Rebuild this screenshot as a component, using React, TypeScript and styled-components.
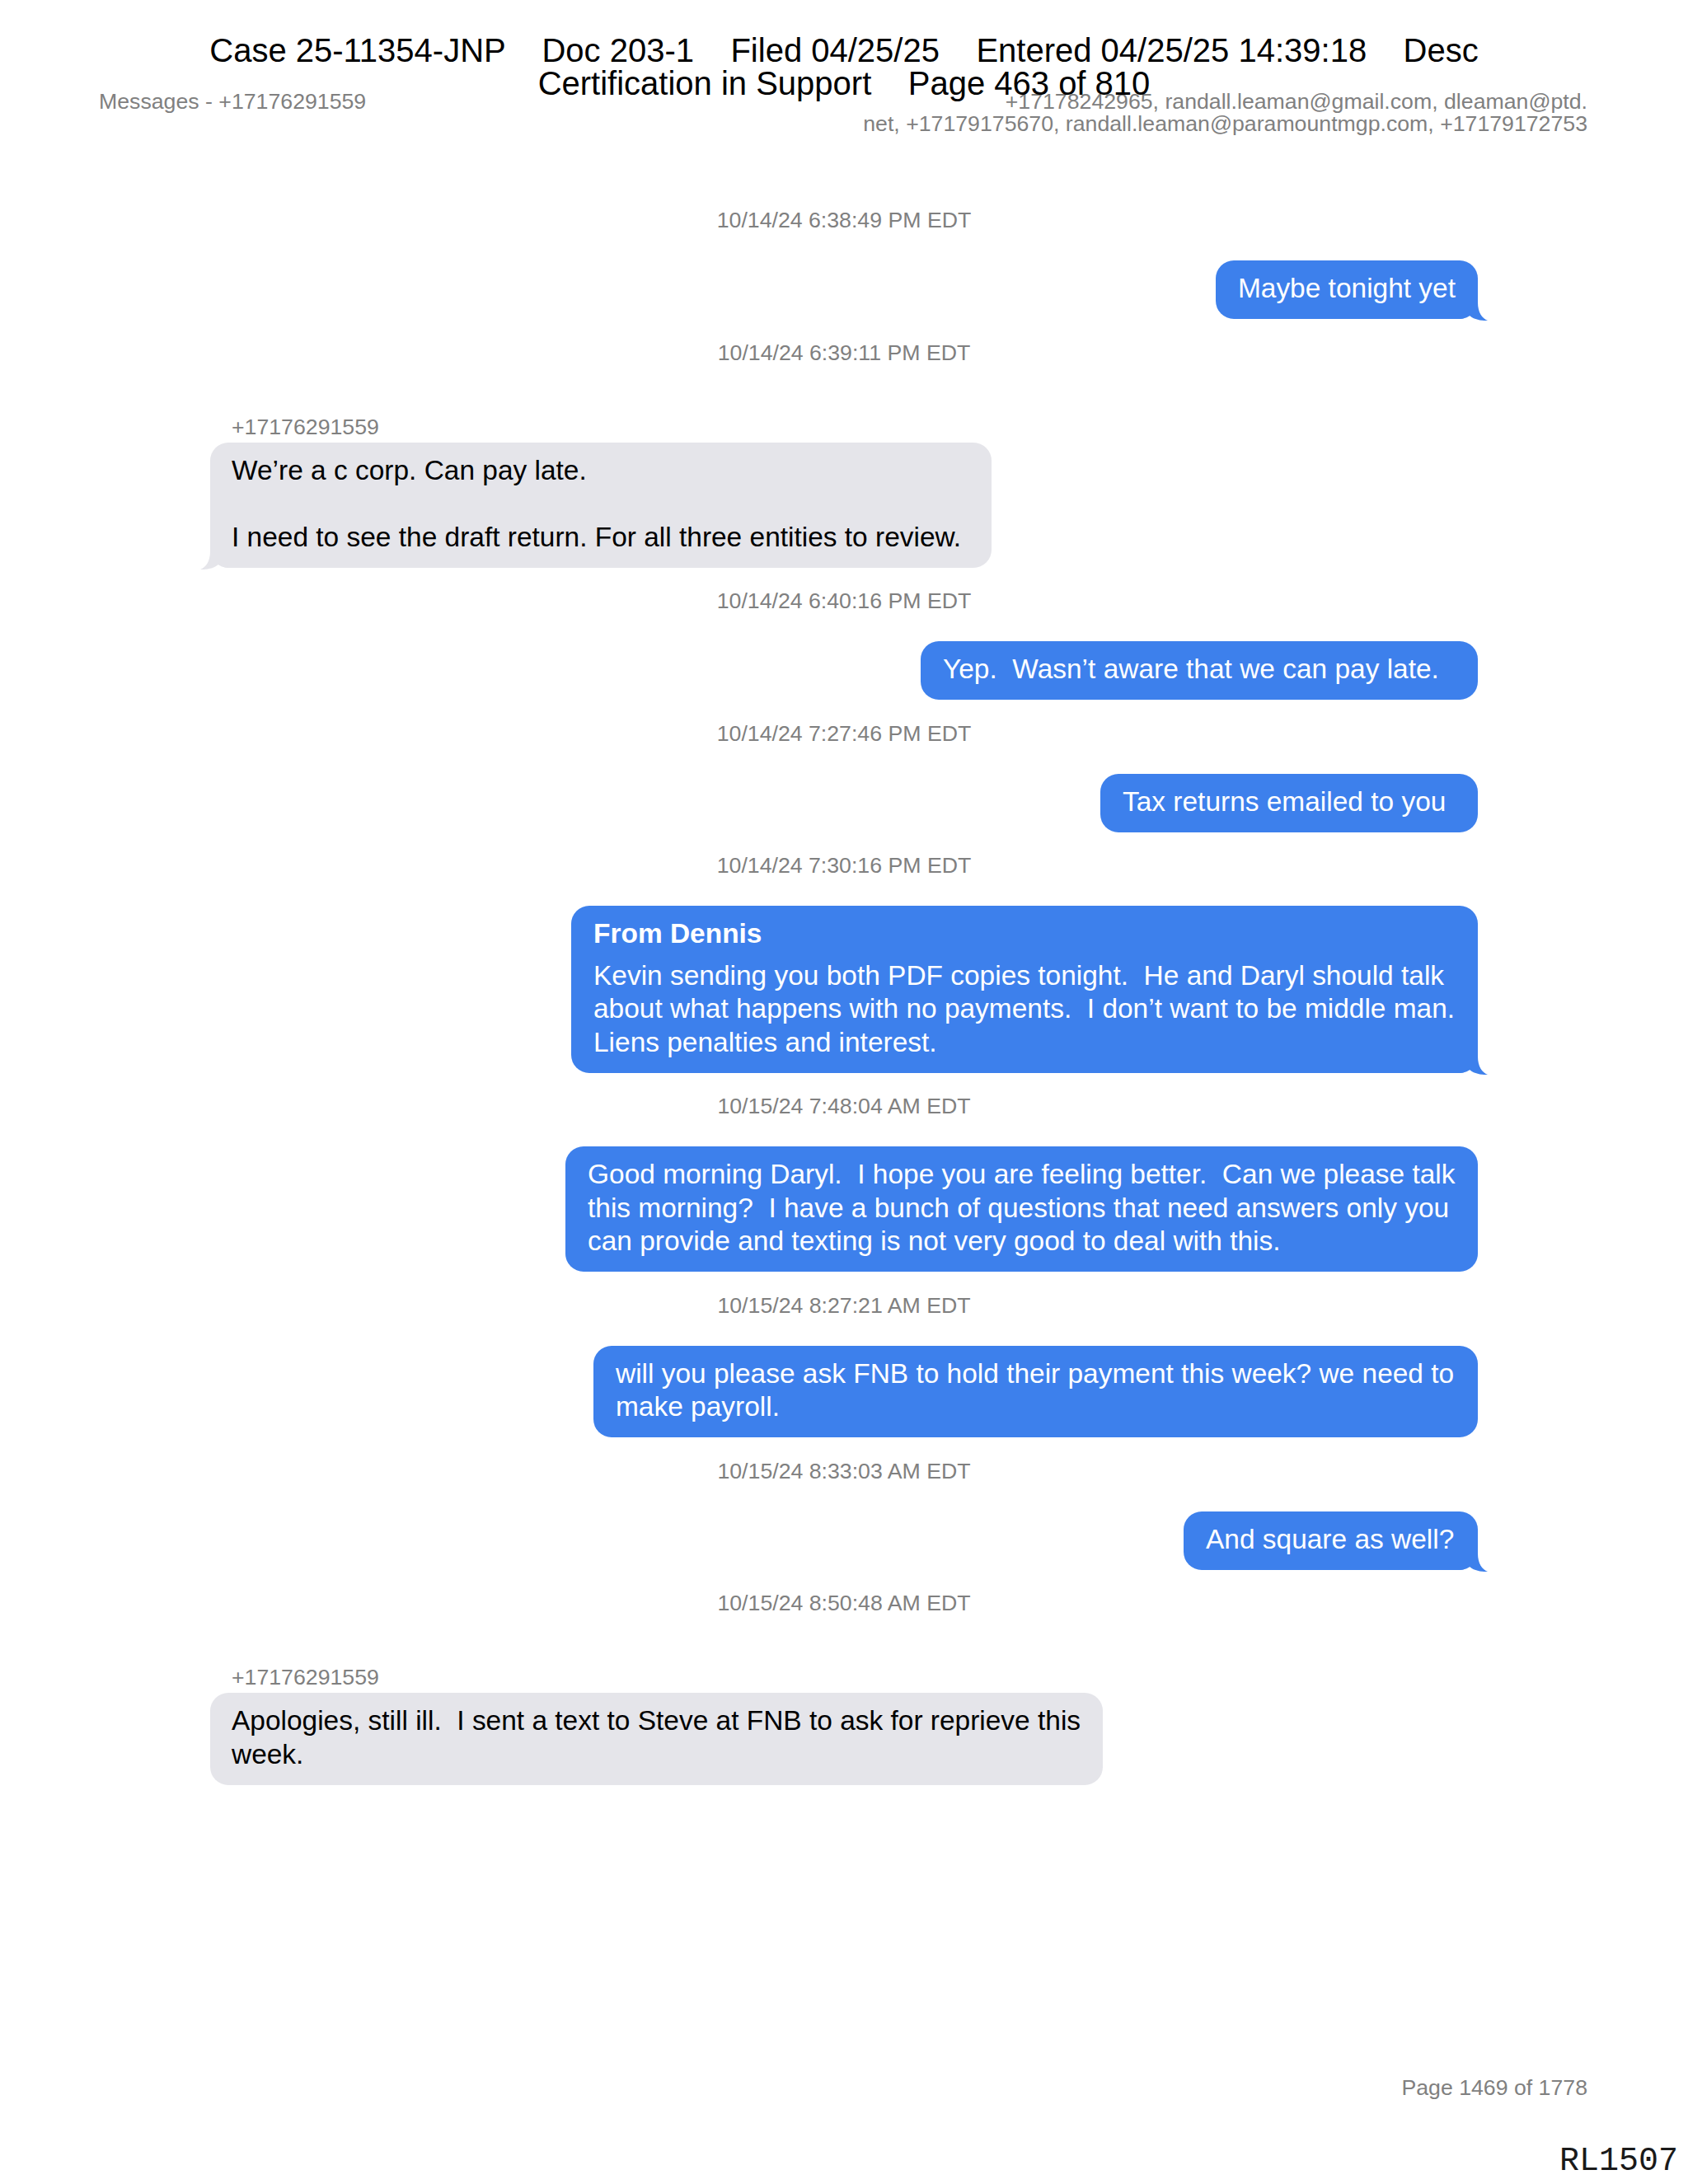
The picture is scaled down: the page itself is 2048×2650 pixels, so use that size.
import React from "react";
import styled, { createGlobalStyle } from "styled-components";

const GlobalStyle = createGlobalStyle`
  html, body {
    margin: 0;
    padding: 0;
    background: #ffffff;
  }
  body {
    font-family: "Liberation Sans", Arial, Helvetica, sans-serif;
  }
`;

const BLUE = "#3d80ec";
const GRAY = "#e5e5ea";
const MUTED = "#808080";

const Page = styled.div`
  position: relative;
  box-sizing: border-box;
  width: 2048px;
  min-height: 2650px;
  padding: 110px 122px 103px 120px;
  display: flex;
  flex-direction: column;
  background: #ffffff;
  font-family: "Liberation Sans", Arial, Helvetica, sans-serif;
`;

const CourtStamp = styled.div`
  position: absolute;
  top: 41px;
  left: 0;
  right: 0;
  z-index: 2;
  text-align: center;
  white-space: pre;
  font-family: "Liberation Sans", Arial, Helvetica, sans-serif;
  font-size: 40px;
  line-height: 40px;
  color: #000000;
`;

const HeaderRow = styled.header`
  display: flex;
  justify-content: space-between;
  align-items: flex-start;
  font-size: 26.7px;
  line-height: 27px;
  color: ${MUTED};
`;

const HeaderTitle = styled.div`
  white-space: pre;
`;

const Participants = styled.div`
  text-align: right;
  white-space: pre;
`;

const Thread = styled.main`
  display: flex;
  flex-direction: column;
  margin-top: 62.5px;
  padding: 0 133px 0 135px;
`;

const Timestamp = styled.div`
  margin-top: 25.5px;
  text-align: center;
  font-size: 26.7px;
  line-height: 30px;
  color: ${MUTED};
`;

const SentRow = styled.div`
  display: flex;
  justify-content: flex-end;
  margin-top: 34px;
`;

const ReceivedGroup = styled.div`
  display: flex;
  flex-direction: column;
  align-items: flex-start;
  margin-top: 60px;
`;

const SenderLabel = styled.div`
  padding-left: 26px;
  margin-bottom: 4px;
  font-size: 26.7px;
  line-height: 30px;
  color: ${MUTED};
`;

const Bubble = styled.div<{ $sent: boolean; $minWidth: number }>`
  position: relative;
  box-sizing: border-box;
  min-width: ${(p) => p.$minWidth}px;
  padding: 14px 27px 16.5px ${(p) => (p.$sent ? 27 : 26)}px;
  border-radius: 22px;
  background: ${(p) => (p.$sent ? BLUE : GRAY)};
  color: ${(p) => (p.$sent ? "#ffffff" : "#000000")};
  font-size: 33.46px;
  line-height: 40.5px;
  white-space: pre;
`;

const BubbleTitle = styled.div`
  font-weight: 700;
  margin-bottom: 10px;
`;

const TailSvg = styled.svg<{ $side: "left" | "right" }>`
  position: absolute;
  bottom: -2px;
  width: 34px;
  height: 24px;
  ${(p) =>
    p.$side === "right"
      ? "right: -12px;"
      : "left: -12px; transform: scaleX(-1);"}
`;

const Footer = styled.footer`
  margin-top: auto;
  text-align: right;
  font-size: 26.7px;
  line-height: 27px;
  color: ${MUTED};
`;

const BatesNumber = styled.div`
  position: absolute;
  right: 12px;
  bottom: 7px;
  font-family: "Liberation Mono", "Courier New", monospace;
  font-size: 40px;
  line-height: 40px;
  color: #1a1a1a;
`;

const Tail: React.FC<{ side: "left" | "right"; color: string }> = ({ side, color }) => (
  <TailSvg $side={side} viewBox="0 0 34 24" aria-hidden="true">
    <path
      d="M0 0 H22 V2 C22 14 27 21 34 24 C26 24.4 16 22.5 11 17 C8 20 4 22 0 22 Z"
      fill={color}
    />
  </TailSvg>
);

type Msg = {
  time: string;
  sent: boolean;
  sender?: string;
  title?: string;
  text: string;
  width: number;
  tail?: boolean;
};

const messages: Msg[] = [
  { time: "10/14/24 6:38:49 PM EDT", sent: true, text: "Maybe tonight yet", width: 316, tail: true },
  {
    time: "10/14/24 6:39:11 PM EDT",
    sent: false,
    sender: "+17176291559",
    text: "We’re a c corp. Can pay late.\n\nI need to see the draft return. For all three entities to review.",
    width: 948,
    tail: true,
  },
  { time: "10/14/24 6:40:16 PM EDT", sent: true, text: "Yep.  Wasn’t aware that we can pay late.", width: 676 },
  { time: "10/14/24 7:27:46 PM EDT", sent: true, text: "Tax returns emailed to you", width: 458 },
  {
    time: "10/14/24 7:30:16 PM EDT",
    sent: true,
    title: "From Dennis",
    text: "Kevin sending you both PDF copies tonight.  He and Daryl should talk\nabout what happens with no payments.  I don’t want to be middle man.\nLiens penalties and interest.",
    width: 1100,
    tail: true,
  },
  {
    time: "10/15/24 7:48:04 AM EDT",
    sent: true,
    text: "Good morning Daryl.  I hope you are feeling better.  Can we please talk\nthis morning?  I have a bunch of questions that need answers only you\ncan provide and texting is not very good to deal with this.",
    width: 1107,
  },
  {
    time: "10/15/24 8:27:21 AM EDT",
    sent: true,
    text: "will you please ask FNB to hold their payment this week? we need to\nmake payroll.",
    width: 1073,
  },
  { time: "10/15/24 8:33:03 AM EDT", sent: true, text: "And square as well?", width: 357, tail: true },
  {
    time: "10/15/24 8:50:48 AM EDT",
    sent: false,
    sender: "+17176291559",
    text: "Apologies, still ill.  I sent a text to Steve at FNB to ask for reprieve this\nweek.",
    width: 1082,
  },
];

const MessageBubble: React.FC<{ m: Msg }> = ({ m }) => (
  <Bubble $sent={m.sent} $minWidth={m.width}>
    {m.title && <BubbleTitle>{m.title}</BubbleTitle>}
    {m.text}
    {m.tail && <Tail side={m.sent ? "right" : "left"} color={m.sent ? BLUE : GRAY} />}
  </Bubble>
);

export default function App() {
  return (
    <>
      <GlobalStyle />
      <Page>
        <CourtStamp>
          {"Case 25-11354-JNP    Doc 203-1    Filed 04/25/25    Entered 04/25/25 14:39:18    Desc\nCertification in Support    Page 463 of 810"}
        </CourtStamp>

        <HeaderRow>
          <HeaderTitle>Messages - +17176291559</HeaderTitle>
          <Participants>
            {"+17178242965, randall.leaman@gmail.com, dleaman@ptd.\nnet, +17179175670, randall.leaman@paramountmgp.com, +17179172753"}
          </Participants>
        </HeaderRow>

        <Thread>
          {messages.map((m, i) => (
            <React.Fragment key={i}>
              <Timestamp>{m.time}</Timestamp>
              {m.sent ? (
                <SentRow>
                  <MessageBubble m={m} />
                </SentRow>
              ) : (
                <ReceivedGroup>
                  <SenderLabel>{m.sender}</SenderLabel>
                  <MessageBubble m={m} />
                </ReceivedGroup>
              )}
            </React.Fragment>
          ))}
        </Thread>

        <Footer>Page 1469 of 1778</Footer>
        <BatesNumber>RL1507</BatesNumber>
      </Page>
    </>
  );
}
